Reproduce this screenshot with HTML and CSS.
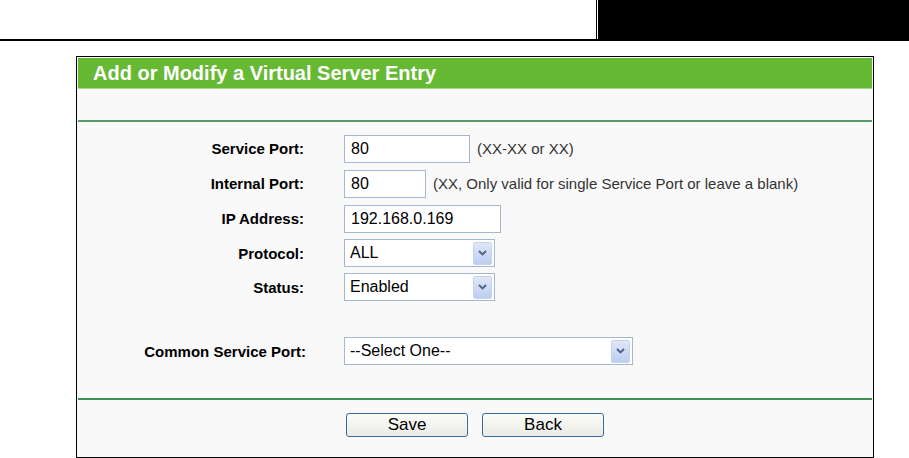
FILE: index.html
```html
<!DOCTYPE html>
<html>
<head>
<meta charset="utf-8">
<link rel="stylesheet" href="styles.css">
</head>
<body>
<div class="topbar">
  <div class="topbar-space"></div>
  <div class="topbar-tab"></div>
</div>
<div class="topline"></div>
<div class="frame">
  <div class="title">Add or Modify a Virtual Server Entry</div>
  <div class="subbar"></div>
  <div class="content">
    <div class="row r1">
      <div class="label">Service Port:</div>
      <div class="field"><div class="input w126">80</div><span class="hint">(XX-XX or XX)</span></div>
    </div>
    <div class="row r2">
      <div class="label">Internal Port:</div>
      <div class="field"><div class="input w82">80</div><span class="hint">(XX, Only valid for single Service Port or leave a blank)</span></div>
    </div>
    <div class="row r3">
      <div class="label">IP Address:</div>
      <div class="field"><div class="input w157">192.168.0.169</div></div>
    </div>
    <div class="row r4">
      <div class="label">Protocol:</div>
      <div class="field"><div class="select w151"><span class="sel-text">ALL</span><span class="arrow"><svg width="9" height="6" viewBox="0 0 9 6"><path d="M1 1 L4.5 4.5 L8 1" fill="none" stroke="#4d6185" stroke-width="1.8"/></svg></span></div></div>
    </div>
    <div class="row r5">
      <div class="label">Status:</div>
      <div class="field"><div class="select w151"><span class="sel-text">Enabled</span><span class="arrow"><svg width="9" height="6" viewBox="0 0 9 6"><path d="M1 1 L4.5 4.5 L8 1" fill="none" stroke="#4d6185" stroke-width="1.8"/></svg></span></div></div>
    </div>
    <div class="row r6">
      <div class="label">Common Service Port:</div>
      <div class="field"><div class="select w289"><span class="sel-text">--Select One--</span><span class="arrow"><svg width="9" height="6" viewBox="0 0 9 6"><path d="M1 1 L4.5 4.5 L8 1" fill="none" stroke="#4d6185" stroke-width="1.8"/></svg></span></div></div>
    </div>
  </div>
  <div class="buttons">
    <div class="btn">Save</div>
    <div class="btn">Back</div>
  </div>
</div>
</body>
</html>
```

FILE: styles.css
```css
html, body {
  margin: 0;
  padding: 0;
  background: #ffffff;
  font-family: "Liberation Sans", Arial, sans-serif;
  width: 909px;
  height: 458px;
  overflow: hidden;
}

.topbar {
  display: flex;
  height: 39px;
}
.topbar-space {
  width: 596px;
  border-right: 1px solid #000;
}
.topbar-tab {
  flex: 1;
  margin-left: 1px;
  background: #000;
}
.topline {
  height: 2px;
  background: #000;
}

.frame {
  margin: 15px 0 0 76px;
  width: 794px;
  height: 398px;
  border: 1px solid #000;
  padding: 1px;
  box-sizing: content-box;
  background: #f9f9f9;
  display: flex;
  flex-direction: column;
}

.title {
  height: 30px;
  background: #66b933;
  border-bottom: 1px solid #a9d98c;
  color: #ffffff;
  font-weight: bold;
  font-size: 20px;
  line-height: 30px;
  padding-left: 15px;
}

.subbar {
  height: 31px;
  background: #f9f9f9;
  border-bottom: 2px solid #5b9a6f;
}

.content {
  padding-top: 9px;
  height: 278px;
  box-sizing: border-box;
  border-bottom: 2px solid #3e9153;
}

.row {
  display: flex;
  align-items: center;
}
.r1, .r2, .r3 { height: 35px; }
.r4, .r5 { height: 34px; }
.r6 { margin-top: 30px; height: 34px; }

.label {
  width: 226px;
  text-align: right;
  font-weight: bold;
  font-size: 15px;
  color: #000;
  padding-right: 40px;
}
.r6 .label { width: 228px; padding-right: 38px; }

.field {
  display: flex;
  align-items: center;
}

.input {
  height: 26px;
  box-sizing: content-box;
  border: 1px solid #a4b7cf;
  background: #fff;
  font-size: 16px;
  line-height: 26px;
  padding: 0 6px;
  color: #000;
}
.w126 { width: 112px; }
.w82 { width: 68px; }
.w157 { width: 143px; }

.hint {
  font-size: 15px;
  color: #333;
  margin-left: 7px;
}

.select {
  height: 26px;
  border: 1px solid #a4b7cf;
  background: #fff;
  display: flex;
  align-items: center;
  justify-content: space-between;
  box-sizing: content-box;
}
.w151 { width: 149px; }
.w289 { width: 287px; }

.sel-text {
  font-size: 16px;
  padding-left: 5px;
  color: #000;
}

.arrow {
  width: 17px;
  height: 21px;
  margin-right: 2px;
  border-radius: 2px;
  background: linear-gradient(#dfe8f8, #bccdf0);
  border: 1px solid #c5d3ee;
  display: flex;
  align-items: center;
  justify-content: center;
}

.buttons {
  display: flex;
  padding-top: 13px;
  padding-left: 268px;
  gap: 14px;
}
.btn {
  width: 120px;
  height: 22px;
  border: 1px solid #3b6a9c;
  border-radius: 3px;
  background: linear-gradient(#fbfbf9, #ebebe5);
  font-size: 17px;
  line-height: 22px;
  text-align: center;
  color: #000;
}
```
